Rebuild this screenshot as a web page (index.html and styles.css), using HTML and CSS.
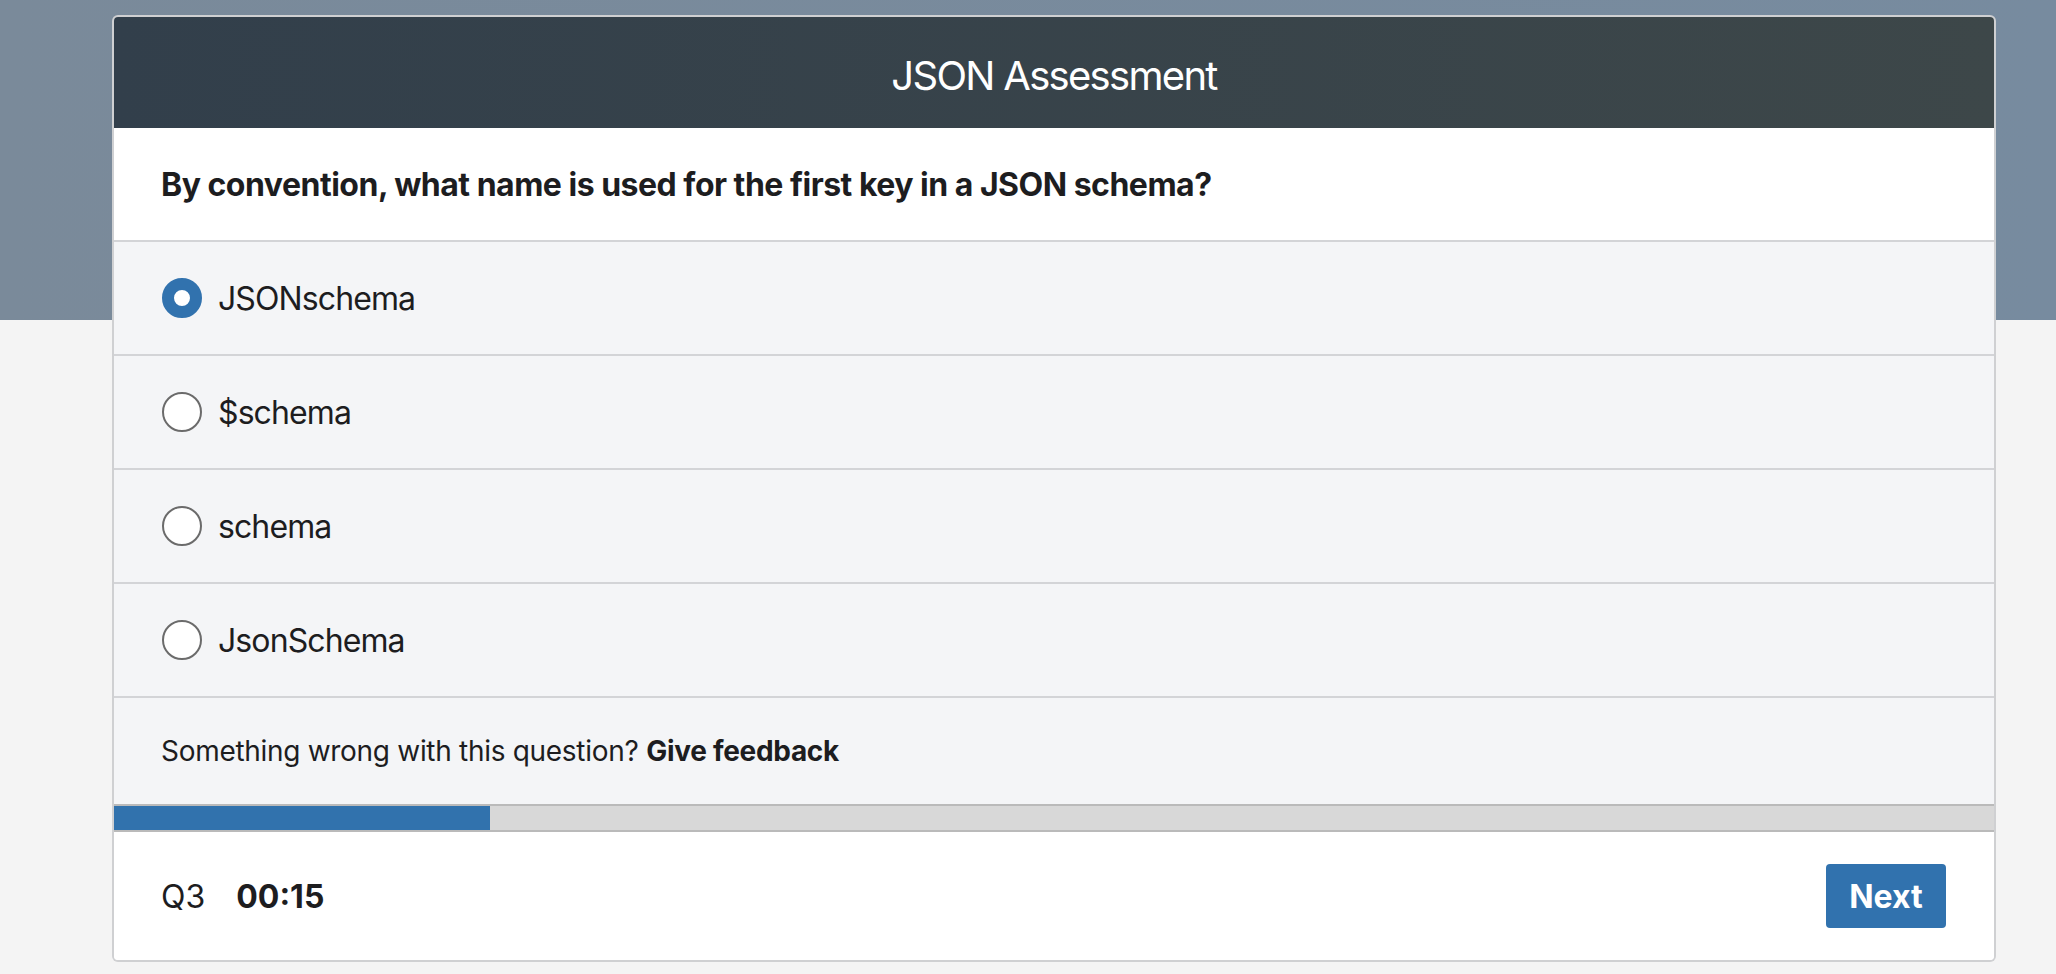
FILE: index.html
```html
<!DOCTYPE html>
<html lang="en">
<head>
<meta charset="utf-8">
<title>JSON Assessment</title>
<link rel="stylesheet" href="styles.css">
</head>
<body>
<div class="card">
  <div class="card-header">JSON Assessment</div>
  <div class="question">By convention, what name is used for the first key in a JSON schema?</div>
  <div class="options">
    <label class="option"><span class="radio checked"></span><span class="option-text">JSONschema</span></label>
    <label class="option"><span class="radio"></span><span class="option-text">$schema</span></label>
    <label class="option"><span class="radio"></span><span class="option-text">schema</span></label>
    <label class="option"><span class="radio"></span><span class="option-text">JsonSchema</span></label>
  </div>
  <div class="feedback">Something wrong with this question? <strong>Give feedback</strong></div>
  <div class="progress"><div class="progress-fill" style="width: 20%"></div></div>
  <div class="footer">
    <div class="status"><span class="qnum">Q3</span><span class="timer">00:15</span></div>
    <button class="next-btn">Next</button>
  </div>
</div>
</body>
</html>
```

FILE: styles.css
```css
* { box-sizing: border-box; }
html, body { margin: 0; padding: 0; }
body {
  font-family: Inter, "Noto Sans", "Liberation Sans", sans-serif;
  color: #1d1d1f;
  background: linear-gradient(90deg, #7a8a9a, #778b9f) 0 0 / 100% 320px no-repeat, #f4f4f4;
  min-height: 974px;
  padding-top: 15px;
}
.card {
  margin: 0 60px 0 112px;
  border: 2px solid rgba(0, 0, 0, 0.15);
  border-radius: 6px;
  overflow: hidden;
  background: #f4f5f7;
}
.card-header {
  height: 111px;
  display: flex;
  align-items: center;
  justify-content: center;
  padding-top: 6px;
  color: #fff;
  font-size: 40px;
  letter-spacing: -1.7px;
  background: linear-gradient(90deg, #323f4b, #3d4749);
}
.question {
  height: 114px;
  display: flex;
  align-items: center;
  padding: 0 47px;
  background: #fff;
  font-size: 32px;
  font-weight: 700;
  letter-spacing: -0.5px;
  border-bottom: 2px solid #d3d4d7;
}
.option {
  height: 114px;
  display: flex;
  align-items: center;
  gap: 16px;
  padding: 0 48px;
  border-bottom: 2px solid #d3d4d7;
  font-size: 32px;
  letter-spacing: -0.9px;
}
.radio {
  width: 40px;
  height: 40px;
  border-radius: 50%;
  border: 2px solid #6b6b6b;
  background: #fff;
  flex: none;
}
.radio.checked {
  border: 12px solid #3172ae;
  background: #fff;
}
.feedback {
  height: 106px;
  display: flex;
  align-items: center;
  gap: 0.28em;
  padding: 0 47px;
  font-size: 28px;
  letter-spacing: -0.3px;
}
.feedback strong { font-weight: 700; }
.progress {
  height: 28px;
  border-top: 2px solid #bababa;
  border-bottom: 2px solid #bababa;
  background: #d8d8d8;
}
.progress-fill {
  height: 100%;
  background: #3172ad;
}
.footer {
  height: 128px;
  display: flex;
  align-items: center;
  justify-content: space-between;
  padding: 0 48px 0 47px;
  background: #fff;
}
.status {
  display: flex;
  align-items: baseline;
  gap: 31px;
  font-size: 32px;
}
.timer { font-weight: 700; }
.next-btn {
  width: 120px;
  height: 64px;
  border: none;
  border-radius: 4px;
  background: #3172ae;
  color: #fff;
  font-family: inherit;
  font-size: 32px;
  font-weight: 700;
  padding: 0;
}
```
